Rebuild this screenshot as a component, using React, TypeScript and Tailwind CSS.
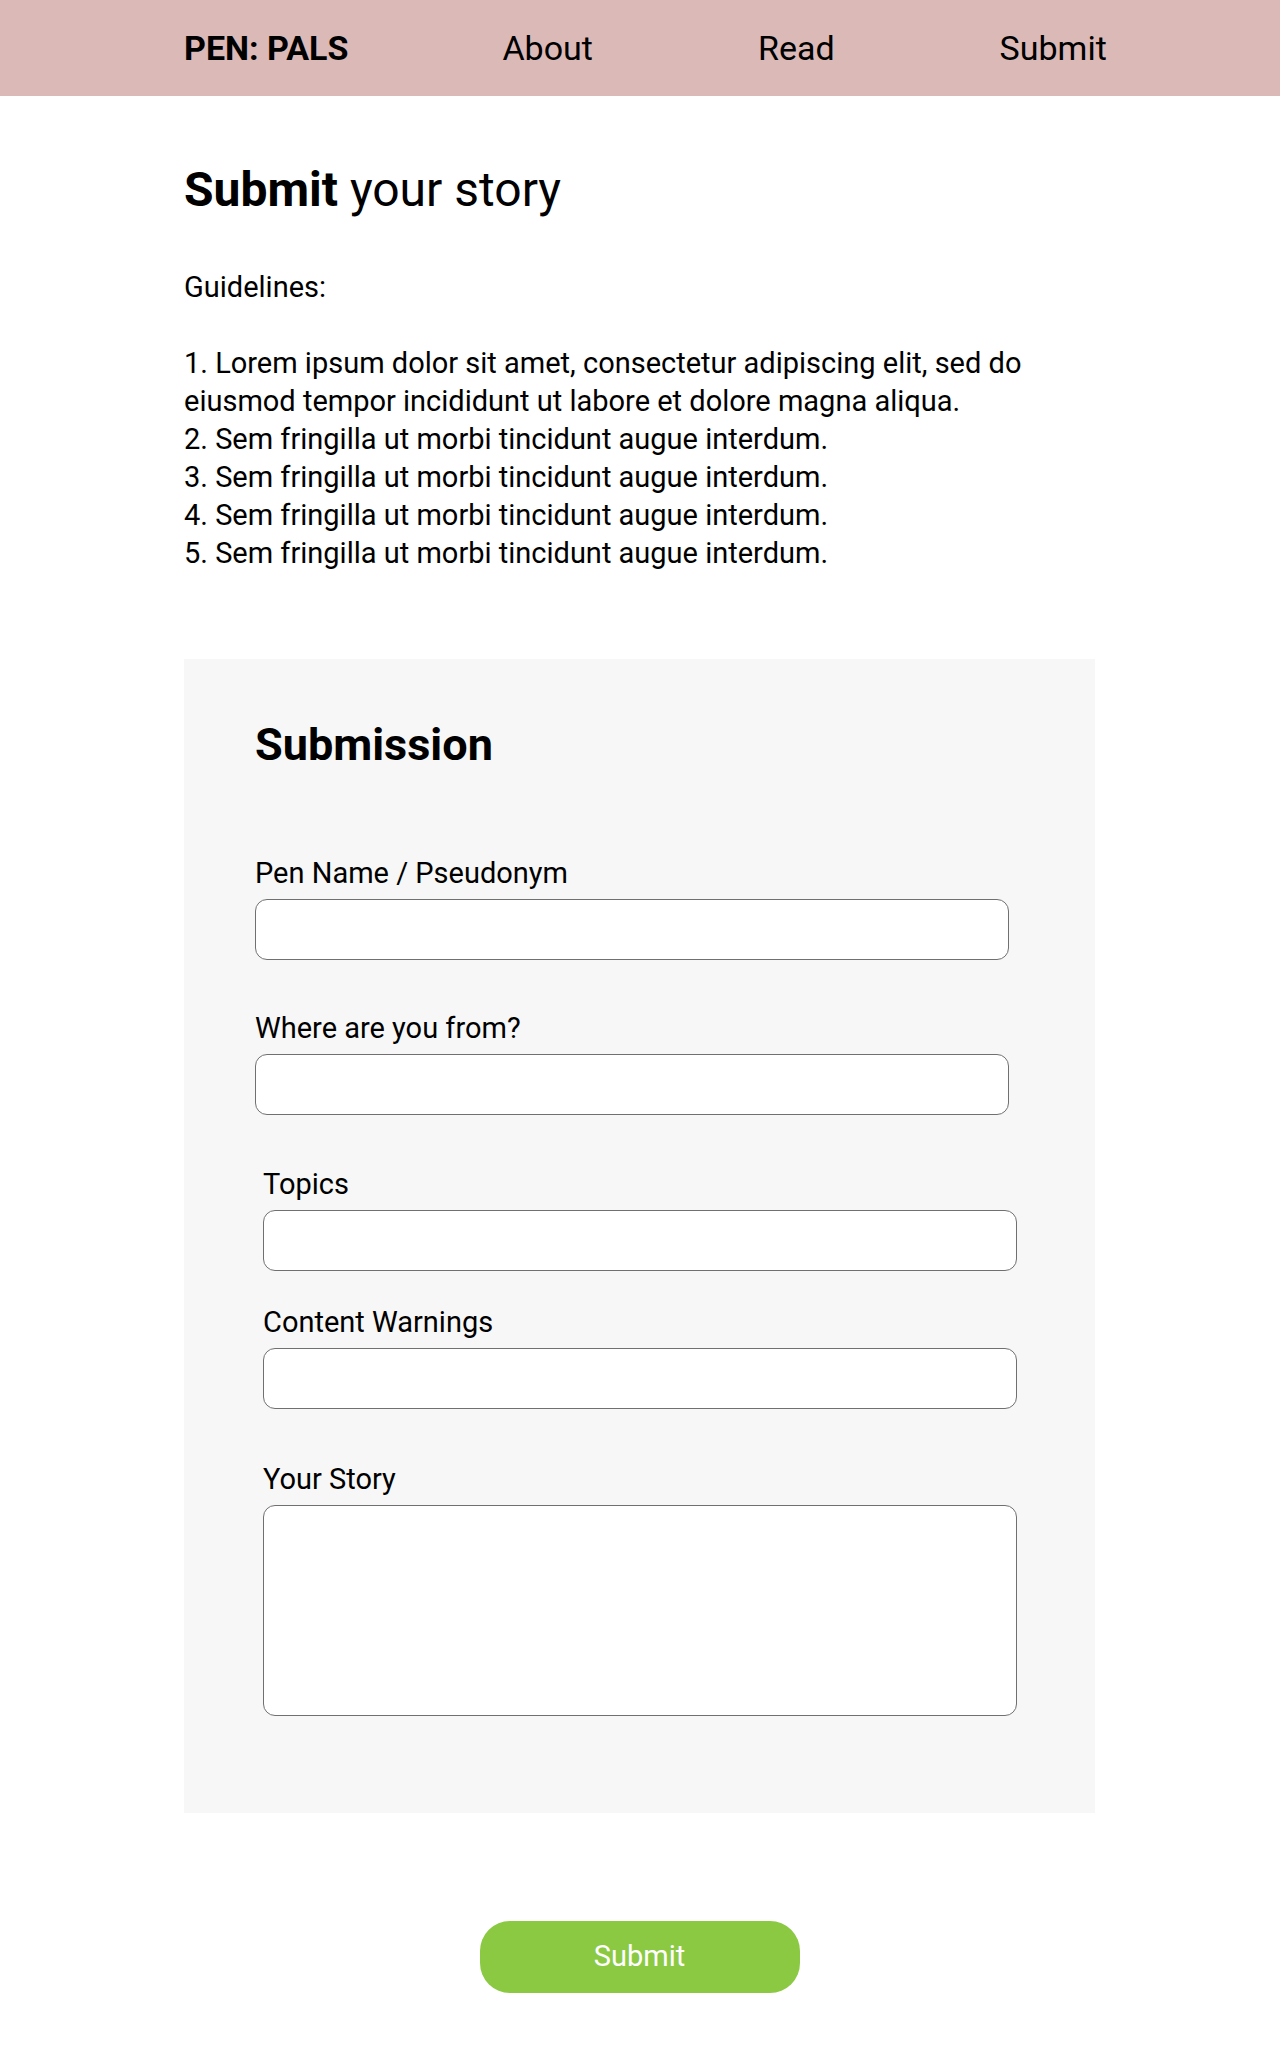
import React from 'react';

const navLinks = ['About', 'Read', 'Submit'];

const guidelines = [
  'Lorem ipsum dolor sit amet, consectetur adipiscing elit, sed do eiusmod tempor incididunt ut labore et dolore magna aliqua.',
  'Sem fringilla ut morbi tincidunt augue interdum.',
  'Sem fringilla ut morbi tincidunt augue interdum.',
  'Sem fringilla ut morbi tincidunt augue interdum.',
  'Sem fringilla ut morbi tincidunt augue interdum.',
];

interface FieldProps {
  label: string;
  className?: string;
  multiline?: boolean;
}

const Field = ({ label, className = '', multiline }: FieldProps) => (
  <div className={className}>
    <label className="block text-[29px] leading-[30px] mb-[11px] text-black">{label}</label>
    {multiline ? (
      <textarea className="block w-[754px] h-[211px] bg-white border border-[#707070] rounded-[12px] outline-none resize-none" />
    ) : (
      <input
        type="text"
        className="block w-[754px] h-[61px] bg-white border border-[#707070] rounded-[12px] outline-none"
      />
    )}
  </div>
);

export default function App() {
  return (
    <div className="min-h-[2061px] bg-white text-black font-['Roboto','Liberation_Sans',sans-serif]">
      <header className="h-[96px] bg-[#dbb9b7]">
        <nav className="h-full flex items-center pl-[184px] text-[34px]">
          <span className="font-bold">PEN: PALS</span>
          {navLinks.map((link, i) => (
            <a key={link} href="#" className={i === 0 ? 'ml-[154px]' : 'ml-[165px]'}>
              {link}
            </a>
          ))}
        </nav>
      </header>

      <main className="w-[911px] ml-[184px]">
        <h1 className="mt-[65px] text-[48px] leading-[58px]">
          <span className="font-bold">Submit</span> your story
        </h1>

        <div className="mt-[49px] text-[29px] leading-[38px]">
          <p>Guidelines:</p>
          <p className="mt-[38px]">
            {guidelines.map((g, i) => (
              <span key={i} className="block">{`${i + 1}. ${g}`}</span>
            ))}
          </p>
        </div>

        {/* submission form panel */}
        <section className="mt-[87px] bg-[#f7f7f7] pt-[59px] pb-[97px] pl-[71px]">
          <h2 className="text-[45px] leading-[53px] font-bold">Submission</h2>
          <Field label="Pen Name / Pseudonym" className="mt-[87px]" />
          <Field label="Where are you from?" className="mt-[53px]" />
          <Field label="Topics" className="mt-[54px] ml-[8px]" />
          <Field label="Content Warnings" className="mt-[36px] ml-[8px]" />
          <Field label="Your Story" className="mt-[55px] ml-[8px]" multiline />
        </section>

        <div className="flex justify-center mt-[108px] pb-[70px]">
          <button
            type="button"
            className="w-[320px] h-[72px] rounded-[30px] bg-[#8bc943] text-white text-[29px]"
          >
            Submit
          </button>
        </div>
      </main>
    </div>
  );
}
